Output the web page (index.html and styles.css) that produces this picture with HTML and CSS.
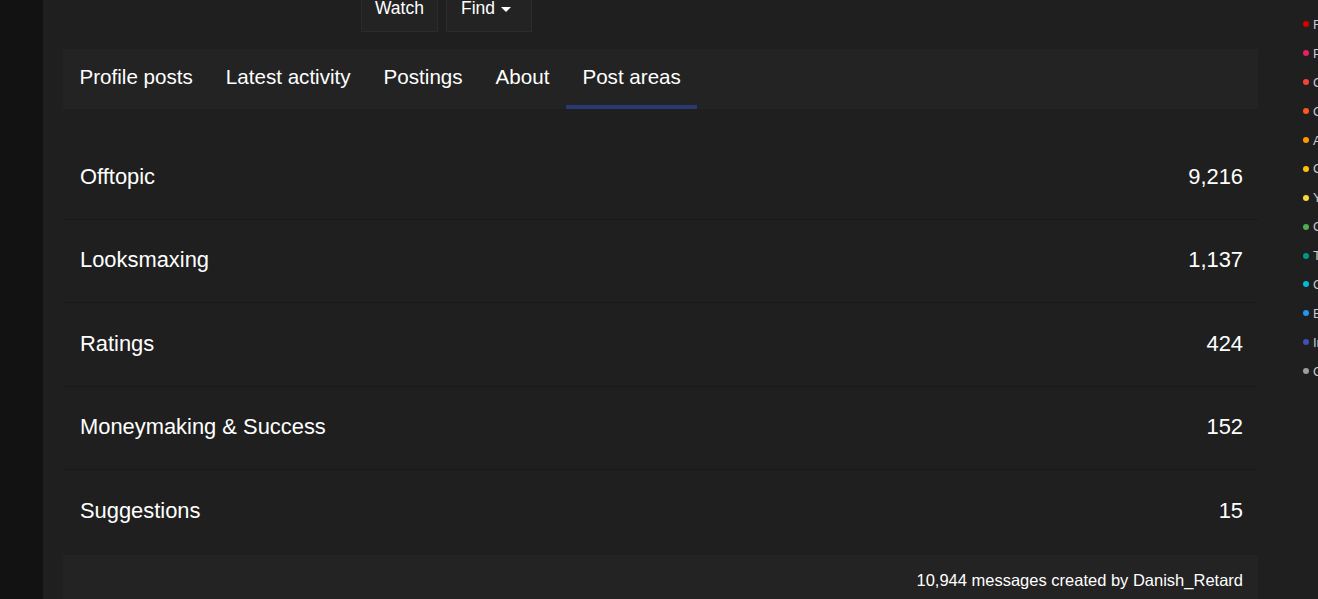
FILE: index.html
```html
<!DOCTYPE html>
<html lang="en">

<head>
    <meta charset="UTF-8">
    <meta name="viewport" content="width=device-width, initial-scale=1.0">
    <title>Danish_Retard - Post areas</title>
    <link rel="stylesheet" href="styles.css">
</head>

<body>
    <div class="side-strip"></div>

    <div class="main">
        <!-- Member actions -->
        <div class="actions">
            <a class="btn" href="#">Watch</a>
            <a class="btn" href="#">Find <span class="caret"></span></a>
        </div>

        <!-- Profile tabs -->
        <ul class="tabs">
            <li><a href="#">Profile posts</a></li>
            <li><a href="#">Latest activity</a></li>
            <li><a href="#">Postings</a></li>
            <li><a href="#">About</a></li>
            <li class="active"><a href="#">Post areas</a></li>
        </ul>

        <!-- Post areas list -->
        <div class="areas">
            <div class="area-row"><span>Offtopic</span><span>9,216</span></div>
            <div class="area-row"><span>Looksmaxing</span><span>1,137</span></div>
            <div class="area-row"><span>Ratings</span><span>424</span></div>
            <div class="area-row"><span>Moneymaking &amp; Success</span><span>152</span></div>
            <div class="area-row"><span>Suggestions</span><span>15</span></div>
        </div>

        <div class="areas-footer">10,944 messages created by Danish_Retard</div>
    </div>

    <!-- Style chooser (mostly off screen) -->
    <ul class="swatches">
        <li><span class="dot" style="background:#d50000"></span>Red</li>
        <li><span class="dot" style="background:#e91e63"></span>Pink</li>
        <li><span class="dot" style="background:#f44336"></span>Coral</li>
        <li><span class="dot" style="background:#ff5722"></span>Orange</li>
        <li><span class="dot" style="background:#ff9800"></span>Amber</li>
        <li><span class="dot" style="background:#ffc107"></span>Gold</li>
        <li><span class="dot" style="background:#fdd835"></span>Yellow</li>
        <li><span class="dot" style="background:#4caf50"></span>Green</li>
        <li><span class="dot" style="background:#009688"></span>Teal</li>
        <li><span class="dot" style="background:#00bcd4"></span>Cyan</li>
        <li><span class="dot" style="background:#2196f3"></span>Blue</li>
        <li><span class="dot" style="background:#3f51b5"></span>Indigo</li>
        <li><span class="dot" style="background:#9e9e9e"></span>Grey</li>
    </ul>
</body>

</html>
```

FILE: styles.css
```css
/* Base styles */
body {
    margin: 0;
    display: flex;
    height: 100vh;
    overflow: hidden;
    background-color: #1f1f1f;
    color: #fff;
    font-family: "Liberation Sans", Arial, sans-serif;
}

a {
    color: #fff;
    text-decoration: none;
}

.side-strip {
    flex: 0 0 43px;
    background-color: #121212;
}

.main {
    flex: 0 0 1195px;
    margin-left: 20px;
}

/* Action buttons */
.actions {
    display: flex;
    gap: 8px;
    margin-top: -16px;
    padding-left: 298px;
}

.btn {
    display: flex;
    align-items: center;
    gap: 6px;
    height: 48px;
    box-sizing: border-box;
    padding: 0 13px;
    border: 1px solid #2c2c2c;
    background-color: #232323;
    font-size: 17.5px;
}

.btn:last-child {
    padding-left: 14px;
    padding-right: 20px;
}

.caret {
    width: 0;
    height: 0;
    margin-top: 2px;
    border-left: 5px solid transparent;
    border-right: 5px solid transparent;
    border-top: 5px solid #fff;
}

/* Tabs */
.tabs {
    display: flex;
    margin: 17px 0 0;
    padding: 0;
    list-style: none;
    background-color: #232323;
}

.tabs li a {
    display: block;
    height: 60px;
    box-sizing: border-box;
    padding: 16px 16.5px 0;
    font-size: 20.6px;
    border-bottom: 4px solid transparent;
}

.tabs li.active a {
    border-bottom-color: #293a73;
}

/* Post areas */
.areas {
    margin-top: 27px;
}

.area-row {
    display: flex;
    justify-content: space-between;
    align-items: center;
    height: 83.5px;
    box-sizing: border-box;
    padding: 0 15px 1px 17px;
    font-size: 21.9px;
    border-bottom: 1px solid #191919;
}

.area-row:last-child {
    border-bottom: none;
}

.areas-footer {
    margin-top: 1px;
    padding: 16px 15px 20px;
    background-color: #232323;
    text-align: right;
    font-size: 16.5px;
}

/* Style chooser */
.swatches {
    margin: 0 0 0 45px;
    padding: 10px 0 0;
    list-style: none;
    white-space: nowrap;
    font-size: 13px;
    color: #ccc;
}

.swatches li {
    display: flex;
    align-items: center;
    gap: 4px;
    height: 28.9px;
}

.dot {
    width: 6px;
    height: 6px;
    border-radius: 50%;
}
```
